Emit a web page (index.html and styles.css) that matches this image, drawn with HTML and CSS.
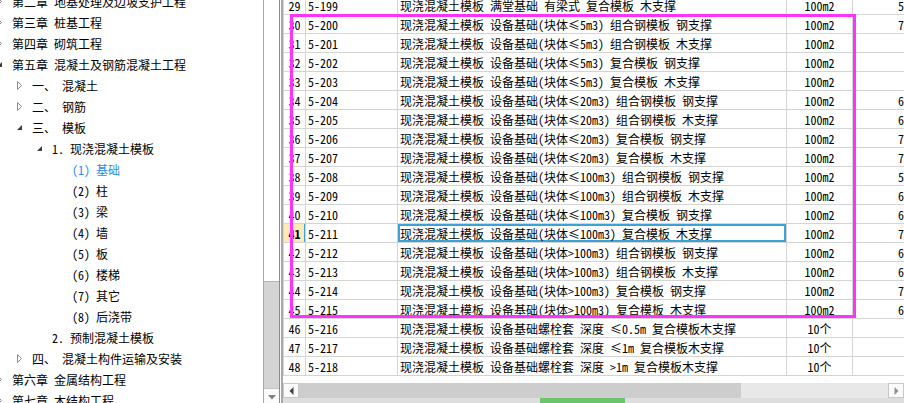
FILE: index.html
```html
<!DOCTYPE html>
<html lang="zh-CN">
<head>
    <meta charset="UTF-8">
    <title>定额库</title>
    <link rel="stylesheet" href="styles.css">
</head>
<body>
<div class="app">
    <div class="tree-pane">
        <div class="tree">
            <div class="node"><span class="tw"><svg width="6" height="9" viewBox="0 0 6 9"><path d="M0.5 0.5 L4.5 4.5 L0.5 8.5 Z" fill="none" stroke="#8c8c8c"/></svg></span><span class="lbl">第二章 地基处理及边坡支护工程</span></div>
            <div class="node"><span class="tw"><svg width="6" height="9" viewBox="0 0 6 9"><path d="M0.5 0.5 L4.5 4.5 L0.5 8.5 Z" fill="none" stroke="#8c8c8c"/></svg></span><span class="lbl">第三章 桩基工程</span></div>
            <div class="node"><span class="tw"><svg width="6" height="9" viewBox="0 0 6 9"><path d="M0.5 0.5 L4.5 4.5 L0.5 8.5 Z" fill="none" stroke="#8c8c8c"/></svg></span><span class="lbl">第四章 砌筑工程</span></div>
            <div class="node"><span class="tw"><svg width="6" height="6" viewBox="0 0 6 6"><path d="M5 0 L5 5 L0 5 Z" fill="#3c3c3c"/></svg></span><span class="lbl">第五章 混凝土及钢筋混凝土工程</span></div>
            <div class="node lv1"><span class="tw"><svg width="6" height="9" viewBox="0 0 6 9"><path d="M0.5 0.5 L4.5 4.5 L0.5 8.5 Z" fill="none" stroke="#8c8c8c"/></svg></span><span class="lbl">一、 混凝土</span></div>
            <div class="node lv1"><span class="tw"><svg width="6" height="9" viewBox="0 0 6 9"><path d="M0.5 0.5 L4.5 4.5 L0.5 8.5 Z" fill="none" stroke="#8c8c8c"/></svg></span><span class="lbl">二、 钢筋</span></div>
            <div class="node lv1"><span class="tw"><svg width="6" height="6" viewBox="0 0 6 6"><path d="M5 0 L5 5 L0 5 Z" fill="#3c3c3c"/></svg></span><span class="lbl">三、 模板</span></div>
            <div class="node lv2"><span class="tw"><svg width="6" height="6" viewBox="0 0 6 6"><path d="M5 0 L5 5 L0 5 Z" fill="#3c3c3c"/></svg></span><span class="lbl">1. 现浇混凝土模板</span></div>
            <div class="node lv3 sel"><span class="tw"></span><span class="lbl">(1) 基础</span></div>
            <div class="node lv3"><span class="tw"></span><span class="lbl">(2) 柱</span></div>
            <div class="node lv3"><span class="tw"></span><span class="lbl">(3) 梁</span></div>
            <div class="node lv3"><span class="tw"></span><span class="lbl">(4) 墙</span></div>
            <div class="node lv3"><span class="tw"></span><span class="lbl">(5) 板</span></div>
            <div class="node lv3"><span class="tw"></span><span class="lbl">(6) 楼梯</span></div>
            <div class="node lv3"><span class="tw"></span><span class="lbl">(7) 其它</span></div>
            <div class="node lv3"><span class="tw"></span><span class="lbl">(8) 后浇带</span></div>
            <div class="node lv2"><span class="tw"></span><span class="lbl">2. 预制混凝土模板</span></div>
            <div class="node lv1"><span class="tw"><svg width="6" height="9" viewBox="0 0 6 9"><path d="M0.5 0.5 L4.5 4.5 L0.5 8.5 Z" fill="none" stroke="#8c8c8c"/></svg></span><span class="lbl">四、 混凝土构件运输及安装</span></div>
            <div class="node"><span class="tw"><svg width="6" height="9" viewBox="0 0 6 9"><path d="M0.5 0.5 L4.5 4.5 L0.5 8.5 Z" fill="none" stroke="#8c8c8c"/></svg></span><span class="lbl">第六章 金属结构工程</span></div>
            <div class="node"><span class="tw"><svg width="6" height="9" viewBox="0 0 6 9"><path d="M0.5 0.5 L4.5 4.5 L0.5 8.5 Z" fill="none" stroke="#8c8c8c"/></svg></span><span class="lbl">第七章 木结构工程</span></div>
        </div>
    </div>

    <div class="vscroll">
        <div class="vthumb"></div>
        <div class="vtrack"></div>
        <div class="vbtn"><svg width="8" height="5" viewBox="0 0 8 5"><path d="M0 0 L8 0 L4 4.5 Z" fill="#808080"/></svg></div>
    </div>

    <div class="split"></div>

    <div class="grid-pane">
        <div class="grid-body">
            <table class="grid">
                <colgroup>
                    <col class="c-no"><col class="c-code"><col class="c-name"><col class="c-unit"><col class="c-price">
                </colgroup>
                <tr><td class="no">29</td><td>5-199</td><td>现浇混凝土模板 满堂基础 有梁式 复合模板 木支撑</td><td class="unit">100m2</td><td class="num">5372.48</td></tr>
                <tr><td class="no">30</td><td>5-200</td><td>现浇混凝土模板 设备基础(块体≤5m3) 组合钢模板 钢支撑</td><td class="unit">100m2</td><td class="num">7016.32</td></tr>
                <tr><td class="no">31</td><td>5-201</td><td>现浇混凝土模板 设备基础(块体≤5m3) 组合钢模板 木支撑</td><td class="unit">100m2</td><td class="num"></td></tr>
                <tr><td class="no">32</td><td>5-202</td><td>现浇混凝土模板 设备基础(块体≤5m3) 复合模板 钢支撑</td><td class="unit">100m2</td><td class="num"></td></tr>
                <tr><td class="no">33</td><td>5-203</td><td>现浇混凝土模板 设备基础(块体≤5m3) 复合模板 木支撑</td><td class="unit">100m2</td><td class="num"></td></tr>
                <tr><td class="no">34</td><td>5-204</td><td>现浇混凝土模板 设备基础(块体≤20m3) 组合钢模板 钢支撑</td><td class="unit">100m2</td><td class="num">6241.05</td></tr>
                <tr><td class="no">35</td><td>5-205</td><td>现浇混凝土模板 设备基础(块体≤20m3) 组合钢模板 木支撑</td><td class="unit">100m2</td><td class="num">6188.90</td></tr>
                <tr><td class="no">36</td><td>5-206</td><td>现浇混凝土模板 设备基础(块体≤20m3) 复合模板 钢支撑</td><td class="unit">100m2</td><td class="num">7103.64</td></tr>
                <tr><td class="no">37</td><td>5-207</td><td>现浇混凝土模板 设备基础(块体≤20m3) 复合模板 木支撑</td><td class="unit">100m2</td><td class="num">7052.17</td></tr>
                <tr><td class="no">38</td><td>5-208</td><td>现浇混凝土模板 设备基础(块体≤100m3) 组合钢模板 钢支撑</td><td class="unit">100m2</td><td class="num">5874.26</td></tr>
                <tr><td class="no">39</td><td>5-209</td><td>现浇混凝土模板 设备基础(块体≤100m3) 组合钢模板 木支撑</td><td class="unit">100m2</td><td class="num">6015.83</td></tr>
                <tr><td class="no">40</td><td>5-210</td><td>现浇混凝土模板 设备基础(块体≤100m3) 复合模板 钢支撑</td><td class="unit">100m2</td><td class="num">6930.41</td></tr>
                <tr class="cur"><td class="no">41</td><td>5-211</td><td class="focus">现浇混凝土模板 设备基础(块体≤100m3) 复合模板 木支撑</td><td class="unit">100m2</td><td class="num">7011.59</td></tr>
                <tr><td class="no">42</td><td>5-212</td><td>现浇混凝土模板 设备基础(块体&gt;100m3) 组合钢模板 钢支撑</td><td class="unit">100m2</td><td class="num">6120.77</td></tr>
                <tr><td class="no">43</td><td>5-213</td><td>现浇混凝土模板 设备基础(块体&gt;100m3) 组合钢模板 木支撑</td><td class="unit">100m2</td><td class="num">6087.34</td></tr>
                <tr><td class="no">44</td><td>5-214</td><td>现浇混凝土模板 设备基础(块体&gt;100m3) 复合模板 钢支撑</td><td class="unit">100m2</td><td class="num">7148.02</td></tr>
                <tr><td class="no">45</td><td>5-215</td><td>现浇混凝土模板 设备基础(块体&gt;100m3) 复合模板 木支撑</td><td class="unit">100m2</td><td class="num">6993.18</td></tr>
                <tr><td class="no">46</td><td>5-216</td><td>现浇混凝土模板 设备基础螺栓套 深度 ≤0.5m 复合模板木支撑</td><td class="unit">10个</td><td class="num"></td></tr>
                <tr><td class="no">47</td><td>5-217</td><td>现浇混凝土模板 设备基础螺栓套 深度 ≤1m 复合模板木支撑</td><td class="unit">10个</td><td class="num"></td></tr>
                <tr><td class="no">48</td><td>5-218</td><td>现浇混凝土模板 设备基础螺栓套 深度 &gt;1m 复合模板木支撑</td><td class="unit">10个</td><td class="num"></td></tr>
            </table>
        </div>
        <div class="hscroll">
            <div class="hbtn"><svg width="5" height="8" viewBox="0 0 5 8"><path d="M4.5 0 L4.5 8 L0.5 4 Z" fill="#404040"/></svg></div>
            <div class="hthumb"></div>
            <div class="htrack"></div>
            <div class="hbtn"><svg width="5" height="8" viewBox="0 0 5 8"><path d="M0.5 0 L0.5 8 L4.5 4 Z" fill="#909090"/></svg></div>
        </div>
        <div class="status"><div class="status-tab"></div></div>
    </div>

    <div class="mark"></div>
</div>
</body>
</html>
```

FILE: styles.css
```css
* {
    box-sizing: border-box;
    margin: 0;
    padding: 0;
}
body {
    font-family: "Noto Sans Mono CJK SC", "Noto Sans CJK SC", sans-serif;
    font-size: 12px;
    color: #000;
    background-color: #fff;
    overflow: hidden;
}
.app {
    position: relative;
    display: flex;
    height: 403px;
    overflow: hidden;
}

/* tree */
.tree-pane {
    width: 263px;
    flex: none;
    overflow: hidden;
    background-color: #fff;
}
.tree {
    margin: -9px 0 0 -10px;
}
.node {
    display: flex;
    align-items: center;
    height: 21px;
    white-space: nowrap;
}
.lv1 {
    padding-left: 20px;
}
.lv2 {
    padding-left: 40px;
}
.lv3 {
    padding-left: 60px;
}
.tw {
    width: 20px;
    height: 21px;
    flex: none;
    display: flex;
    align-items: center;
    justify-content: center;
}
.lbl {
    margin-left: 2px;
    line-height: 21px;
}
.sel .lbl {
    color: #2a8be6;
}

/* vertical scrollbar */
.vscroll {
    width: 16px;
    flex: none;
    display: flex;
    flex-direction: column;
    border-left: 1px solid #a8a8a8;
}
.vthumb {
    height: 282px;
    flex: none;
    background-color: #fff;
    border-bottom: 1px solid #b4b4b4;
}
.vtrack {
    height: 106px;
    flex: none;
    background-color: #d4d4d4;
}
.vbtn {
    height: 17px;
    flex: none;
    display: flex;
    align-items: center;
    justify-content: center;
    background-color: #fbfbfb;
    border-top: 1px solid #c4c4c4;
}
.split {
    width: 4px;
    flex: none;
    background-color: #fff;
    border-left: 1px solid #8c8c8c;
    border-right: 2px solid #a8a8a8;
}

/* grid */
.grid-pane {
    flex: 1;
    min-width: 0;
    display: flex;
    flex-direction: column;
}
.grid-body {
    height: 383px;
    flex: none;
    overflow: hidden;
    background-color: #fff;
}
.grid {
    border-collapse: collapse;
    table-layout: fixed;
    width: 689px;
    margin-top: -5px;
}
.c-no {
    width: 22px;
}
.c-code {
    width: 92px;
}
.c-name {
    width: 389px;
}
.c-unit {
    width: 66px;
}
.c-price {
    width: 120px;
}
.grid td {
    height: 19px;
    padding: 0 2px;
    border: 1px solid #d4d4d4;
    line-height: 17px;
    white-space: nowrap;
    overflow: hidden;
}
.grid td.no {
    padding: 0;
    text-align: center;
}
.grid td.unit {
    text-align: center;
}
.grid td.num {
    padding-left: 45px;
}
.cur td.no {
    background-color: #ffe9b4;
    font-weight: bold;
    box-shadow: inset -1px 0 0 #3ba2d6;
}
.grid td.focus {
    box-shadow: inset 0 0 0 2px #3ba2d6;
}

/* horizontal scrollbar */
.hscroll {
    height: 15px;
    flex: none;
    display: flex;
    background-color: #e6e6e6;
}
.hbtn {
    width: 16px;
    flex: none;
    display: flex;
    align-items: center;
    justify-content: center;
    background-color: #fafafa;
    border: 1px solid #c8c8c8;
}
.hthumb {
    width: 442px;
    flex: none;
    background-color: #cdcdcd;
}
.htrack {
    flex: 1;
    background-color: #e8e8e8;
}
.status {
    flex: 1;
    display: flex;
    background-color: #dedede;
}
.status-tab {
    width: 85px;
    margin-left: 257px;
    background-color: #6cc46c;
}

/* annotation frame */
.mark {
    position: absolute;
    left: 290px;
    top: 14px;
    width: 566px;
    height: 304px;
    border: 3px solid #ff33ff;
}
```
